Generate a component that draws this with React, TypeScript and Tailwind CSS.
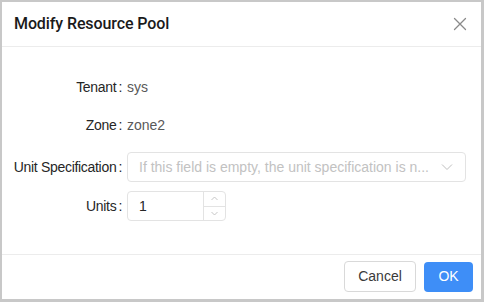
import React from "react";

export default function App() {
  return (
    <div
      className="w-[484px] h-[302px] bg-white border-l-2 border-t-2 border-r-[3px] border-b-[3px] border-[#c8c8c8] flex flex-col"
      style={{ fontFamily: '"Liberation Sans", Arial, sans-serif' }}
    >
      <div className="h-[45px] flex items-center justify-between pl-3 pr-[14px] border-b border-[#ececec]">
        <div className="text-[16px] font-medium text-[#1a1a1a] font-['Roboto',sans-serif] tracking-[-0.1px]">Modify Resource Pool</div>
        <svg width="14" height="14" viewBox="0 0 14 14" className="text-[#8a8a8a]">
          <path d="M1.5 1.5 L12.5 12.5 M12.5 1.5 L1.5 12.5" stroke="currentColor" strokeWidth="1.3" strokeLinecap="round" />
        </svg>
      </div>
      <div className="flex-1 flex flex-col pt-[25px] text-[14px]">
        <div className="flex items-center h-[30px]">
          <div className="w-[120px] text-right text-[#262626] tracking-[-0.3px]">Tenant<span className="ml-[2px]">:</span></div>
          <div className="ml-[5px] text-[#595959]">sys</div>
        </div>
        <div className="flex items-center h-[30px] mt-[8px]">
          <div className="w-[120px] text-right text-[#262626] tracking-[-0.3px]">Zone<span className="ml-[2px]">:</span></div>
          <div className="ml-[5px] text-[#595959]">zone2</div>
        </div>
        <div className="flex items-center h-[30px] mt-[12px]">
          <div className="w-[120px] text-right text-[#262626] whitespace-nowrap tracking-[-0.3px]">Unit Specification<span className="ml-[2px]">:</span></div>
          <div className="ml-[5px] w-[339px] h-[30px] border border-[#e3e3e3] rounded-[4px] flex items-center justify-between pl-[11px] pr-[12px]">
            <span className="text-[#c2c2c2] whitespace-nowrap">If this field is empty, the unit specification is n...</span>
            <svg width="12" height="8" viewBox="0 0 12 8" className="text-[#bfbfbf]">
              <path d="M1 1.5 L6 6.5 L11 1.5" fill="none" stroke="currentColor" strokeWidth="1" />
            </svg>
          </div>
        </div>
        <div className="flex items-center h-[30px] mt-[9px]">
          <div className="w-[120px] text-right text-[#262626] tracking-[-0.3px]">Units<span className="ml-[2px]">:</span></div>
          <div className="ml-[5px] w-[99px] h-[30px] border border-[#e3e3e3] rounded-[4px] flex">
            <div className="flex-1 flex items-center pl-[11px] text-[#262626]">1</div>
            <div className="w-[22px] border-l border-[#e3e3e3] flex flex-col">
              <div className="flex-1 flex items-center justify-center border-b border-[#e3e3e3]">
                <svg width="7" height="5" viewBox="0 0 7 5"><path d="M0.5 4 L3.5 1 L6.5 4" fill="none" stroke="#bfbfbf" strokeWidth="0.9" /></svg>
              </div>
              <div className="flex-1 flex items-center justify-center">
                <svg width="7" height="5" viewBox="0 0 7 5"><path d="M0.5 1 L3.5 4 L6.5 1" fill="none" stroke="#bfbfbf" strokeWidth="0.9" /></svg>
              </div>
            </div>
          </div>
        </div>
      </div>
      <div className="h-[45px] border-t border-[#ececec] flex items-center justify-end gap-[8px] pr-[8px] pb-[1px]">
        <button className="h-[31px] w-[72px] border border-[#d9d9d9] rounded-[4px] bg-white text-[14px] text-[#3a3a3a]">Cancel</button>
        <button className="h-[30px] w-[49px] rounded-[4px] bg-[#3e8ef7] text-[14px] text-white">OK</button>
      </div>
    </div>
  );
}
